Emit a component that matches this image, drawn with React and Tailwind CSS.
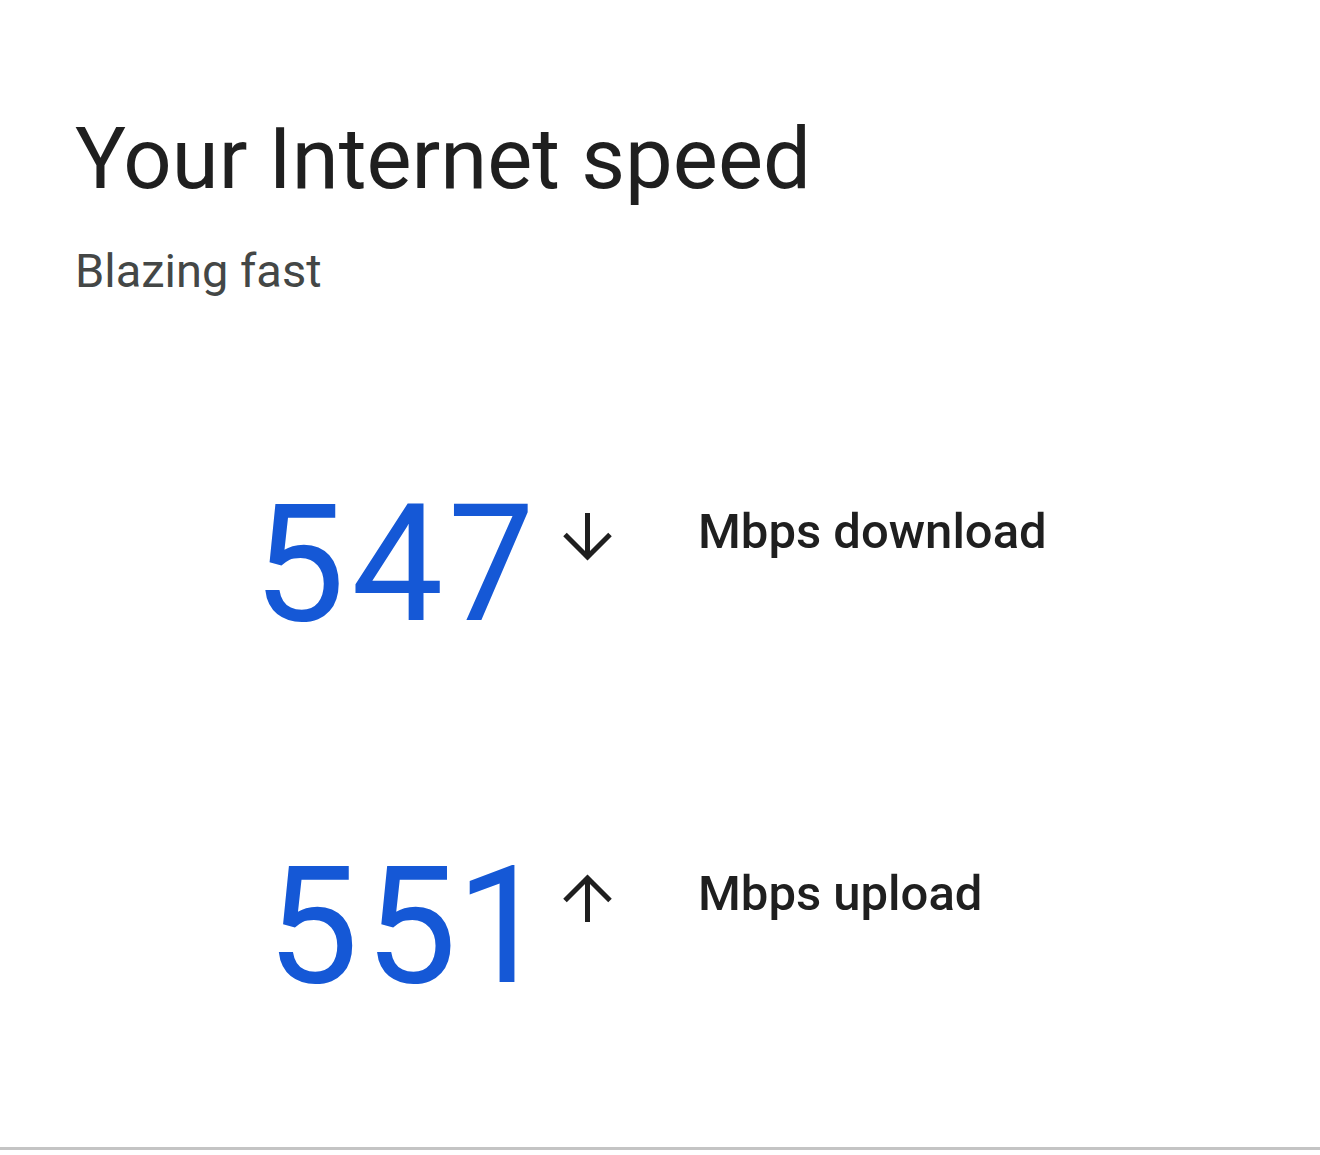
import React from 'react'

function Arrow({ up }) {
  return (
    <svg width="50" height="50" viewBox="0 0 50 50" className="shrink-0">
      {up ? (
        <g stroke="#1f1f1f" strokeWidth="5" fill="none">
          <path d="M24.5 48V4" />
          <path d="M2 26.5L24.5 4L47 26.5" />
        </g>
      ) : (
        <g stroke="#1f1f1f" strokeWidth="5" fill="none">
          <path d="M24.5 0V44" />
          <path d="M2 21.5L24.5 44L47 21.5" />
        </g>
      )}
    </svg>
  )
}

function SpeedRow({ value, label, up }) {
  return (
    <div className="flex h-[164px] items-start">
      <div className="w-[465px] text-right text-[164px] leading-none tracking-[6px] proportional-nums text-[#1558d6] font-['Roboto',sans-serif]">
        {value}
      </div>
      <div className={up ? "ml-[23px] mt-[30px]" : "ml-[23px] mt-[31px]"}>
        <Arrow up={up} />
      </div>
      <div className="ml-[85px] mt-[25px] text-[49px] leading-none font-medium text-[#1f1f1f] font-['Roboto',sans-serif]">
        {label}
      </div>
    </div>
  )
}

export default function App() {
  return (
    <div className="w-[1320px] h-[1155px] bg-white flex flex-col font-['Roboto',sans-serif]">
      <div className="pl-[75px] pt-[117px]">
        <h1 className="text-[85px] leading-none text-[#1f1f1f]">Your Internet speed</h1>
        <p className="mt-[45px] text-[47px] leading-none text-[#444746]">Blazing fast</p>
      </div>
      <div className="pl-[75px] mt-[188px]">
        <SpeedRow value="547" label="Mbps download" />
        <div className="h-[198px]" />
        <SpeedRow value="551" label="Mbps upload" up />
      </div>
      <div className="h-[139px]" />
      <div className="h-[3px] bg-[#c4c4c4]" />
    </div>
  )
}
